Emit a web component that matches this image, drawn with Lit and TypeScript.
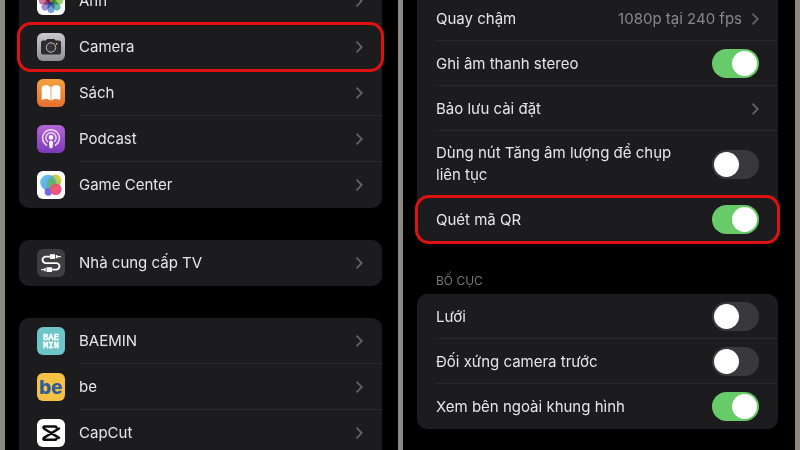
import { LitElement, html, svg, css, nothing, type TemplateResult } from "lit";
import { customElement, property } from "lit/decorators.js";
import { classMap } from "lit/directives/class-map.js";

const petals = [
  ["#f39a2e", 0], ["#e9d23b", 45], ["#8fc650", 90], ["#4fae9a", 135],
  ["#5a8fd6", 180], ["#8f78c8", 225], ["#c8608f", 270], ["#e2564a", 315],
] as const;

const icons: Record<string, TemplateResult> = {
  photos: svg`
    <rect width="28" height="28" rx="6" fill="#fff"/>
    ${petals.map(([c, a]) => svg`<rect class="petal" x="10.500" y="2" width="7" height="11.500" rx="3.500" fill=${c} fill-opacity="0.85" transform=${`rotate(${a} 14 14)`}/>`)}`,
  camera: svg`
    <defs><linearGradient id="cam" x1="0" y1="0" x2="0" y2="1"><stop offset="0" stop-color="#c9c9cd"/><stop offset="1" stop-color="#8f8f95"/></linearGradient></defs>
    <rect width="28" height="28" rx="6" fill="url(#cam)"/>
    <path d="M6 7.6h3l1.2-1.5h7.3l1.3 1.5H22a2 2 0 0 1 2 2v10a2 2 0 0 1-2 2H6a2 2 0 0 1-2-2v-10a2 2 0 0 1 2-2z" fill="#2c2c2e"/>
    <circle cx="14" cy="14.5" r="4.7" fill="#343436" stroke="#bcbcc0" stroke-width="1"/>
    <circle cx="19.6" cy="10.8" r="0.9" fill="#e0bd55"/>`,
  books: svg`
    <defs><linearGradient id="book" x1="0" y1="0" x2="0" y2="1"><stop offset="0" stop-color="#f3a13f"/><stop offset="1" stop-color="#e8702e"/></linearGradient></defs>
    <rect width="28" height="28" rx="6" fill="url(#book)"/>
    <path d="M13.6 8.4C12.6 6.7 11 6.2 9 6.2 7.1 6.2 4.7 6.9 4.7 8.2V21c1.4-.8 2.8-1.1 4.3-1.1 1.9 0 3.5.5 4.6 1.8zM14.4 8.4c1-1.7 2.600-2.200 4.600-2.200 1.900 0 4.300.7 4.300 2V21c-1.400-.8-2.800-1.100-4.300-1.100-1.900 0-3.500.5-4.600 1.800z" fill="#fff"/>`,
  podcast: svg`
    <defs><linearGradient id="pod" x1="0" y1="0" x2="0" y2="1"><stop offset="0" stop-color="#b565d6"/><stop offset="1" stop-color="#7d3bb8"/></linearGradient></defs>
    <rect width="28" height="28" rx="6" fill="url(#pod)"/>
    <g fill="none" stroke="#ecdcf5" stroke-width="1.4" stroke-linecap="round">
      <path d="M9.7 20.3A8.4 8.4 0 1 1 18.3 20.3"/>
      <path d="M10.5 16.600A5.100 5.100 0 1 1 17.500 16.600"/>
    </g>
    <circle cx="14" cy="12.4" r="2.3" fill="#fff"/>
    <path d="M12 17.600c0-1.200.8-1.800 2-1.800s2 .6 2 1.800l-.5 4.400c-.2 1-.7 1.400-1.500 1.400s-1.300-.4-1.500-1.400z" fill="#fff"/>`,
  games: svg`
    <defs>
      <linearGradient id="g1" x1="0" y1="0" x2="1" y2="1"><stop offset="0" stop-color="#58c2e8"/><stop offset="1" stop-color="#4a90e8"/></linearGradient>
      <linearGradient id="g2" x1="1" y1="0" x2="0" y2="1"><stop offset="0" stop-color="#f9d43c"/><stop offset="1" stop-color="#62bf56"/></linearGradient>
      <linearGradient id="g3" x1="0" y1="0" x2="1" y2="1"><stop offset="0" stop-color="#f0566a"/><stop offset="1" stop-color="#ee3f78"/></linearGradient>
    </defs>
    <rect width="28" height="28" rx="6" fill="#fff"/>
    <circle cx="18.3" cy="9.6" r="6.2" fill="url(#g2)"/>
    <circle cx="11" cy="11.5" r="7.8" fill="url(#g1)" fill-opacity="0.9"/>
    <path d="M12.6 7.4a6.2 6.2 0 0 1 6.2 4.3 7.8 7.8 0 0 1-5 7.2 7 7 0 0 1-1.200-11.500z" fill="#62b560" fill-opacity="0.85"/>
    <circle cx="11.3" cy="21" r="3.7" fill="#6a5ae0" fill-opacity="0.92"/>
    <circle cx="18.8" cy="18.3" r="5.8" fill="url(#g3)" fill-opacity="0.92"/>`,
  tv: svg`
    <rect width="28" height="28" rx="6" fill="#3f3f41"/>
    <path d="M13 7.6H8.8a3.25 3.25 0 0 0 0 6.5h10.400a3.250 3.250 0 0 1 0 6.500H15" fill="none" stroke="#fff" stroke-width="1.9"/>
    <path d="M13 5.3h5v4.6h-5zM18.8 6h1.6v3.2h-1.6zM20.4 7h3.4v1.2h-3.4zM9.5 18.2h5.5v4.8H9.5zM7.2 19h1.6v3.2H7.2zM4.2 20h3v1.2h-3z" fill="#fff"/>`,
  baemin: svg`
    <rect width="28" height="28" rx="6" fill="#6bc5c9"/>
    <text class="baemin" text-anchor="middle"><tspan x="14" y="13">BAE</tspan><tspan x="14" y="21">MIN</tspan></text>`,
  be: svg`
    <rect width="28" height="28" rx="6" fill="#f7c244"/>
    <text class="be" x="14" y="21" text-anchor="middle">be</text>`,
  capcut: svg`
    <rect width="28" height="28" rx="6" fill="#fff"/>
    <path d="M22.8 9 7.600 18.400c-1.300.8-1.900 2.400.2 2.400h10.400c1.100 0 1.300-.5 1.300-1.800M22.800 19.400 7.600 10c-1.300-.8-1.900-2.400.2-2.400h10.400c1.100 0 1.300.5 1.300 1.800" fill="none" stroke="#0b0b0c" stroke-width="2.5"/>`,
};

const chevron = html`<svg class="chevron" width="8" height="14" viewBox="0 0 8 14" aria-hidden="true">
  <path d="M1.5 1.7 6.7 7l-5.2 5.3" fill="none" stroke="#626265" stroke-width="1.8"/></svg>`;

const rowStyles = css`
  :host { display: block; }
  .row {
    position: relative;
    display: flex;
    align-items: center;
    box-sizing: border-box;
    padding: 0 19px;
    color: #e6e6e8;
    font-size: 15px;
    line-height: 22px;
    text-decoration: none;
  }
  .label { flex: 1; min-width: 0; }
  .chevron { flex: none; }
  .row::before {
    content: "";
    position: absolute;
    left: var(--line-start);
    right: 0;
    bottom: 0;
    height: 1px;
    background: #29292b;
  }
  .last::before { display: none; }
  .marked::after {
    content: "";
    position: absolute;
    inset: -2px;
    border: 3px solid #df1212;
    border-radius: 14px;
    pointer-events: none;
  }
`;

@customElement("link-row")
class LinkRow extends LitElement {
  @property() label = "";
  @property() value = "";
  @property() icon = "";
  @property({ type: Boolean }) marked = false;
  @property({ type: Boolean }) last = false;

  static styles = [rowStyles, css`
    :host { --line-start: 60px; }
    :host([value]), :host([plain]) { --line-start: 19px; }
    .row { min-height: var(--row-height); }
    .icon { flex: none; margin: 0 14px 0 -1px; }
    .value { color: #88888b; margin-right: 9px; }
    .petal { mix-blend-mode: multiply; }
    .baemin { font: 700 9px/1 "Liberation Mono", monospace; fill: #fff; stroke: #fff; stroke-width: 0.3; }
    .be { font: 800 19px/1 Inter, sans-serif; fill: #2f5c9a; }
  `];

  render() {
    return html`<a href="#" class="row ${classMap({ marked: this.marked, last: this.last })}">
      ${this.icon ? html`<svg class="icon" width="28" height="28" viewBox="0 0 28 28" aria-hidden="true">${icons[this.icon]}</svg>` : nothing}
      <span class="label">${this.label}</span>
      ${this.value ? html`<span class="value">${this.value}</span>` : nothing}
      ${chevron}
    </a>`;
  }
}

@customElement("switch-row")
class SwitchRow extends LitElement {
  @property() label = "";
  @property({ type: Boolean }) on = false;
  @property({ type: Boolean }) marked = false;
  @property({ type: Boolean }) last = false;

  static styles = [rowStyles, css`
    :host { --line-start: 19px; }
    .row { min-height: var(--row-height); padding-top: 11px; padding-bottom: 11px; }
    .label { padding-right: 32px; }
    .switch {
      appearance: none;
      flex: none;
      display: flex;
      box-sizing: border-box;
      width: 47px;
      height: 29px;
      margin: -4px 0;
      padding: 2px;
      border-radius: 15px;
      background: #39393c;
    }
    .switch::before {
      content: "";
      width: 25px;
      height: 25px;
      border-radius: 50%;
      background: #fff;
    }
    .switch:checked { background: #68cb69; justify-content: flex-end; }
  `];

  render() {
    return html`<label class="row ${classMap({ marked: this.marked, last: this.last })}">
      <span class="label">${this.label}</span>
      <input class="switch" type="checkbox" role="switch" .checked=${this.on}>
    </label>`;
  }
}

@customElement("app-root")
class AppRoot extends LitElement {
  static styles = css`
    :host {
      display: grid;
      grid-template-columns: 393fr 392fr;
      gap: 5px;
      padding: 0 5px;
      box-sizing: border-box;
      height: 100vh;
      overflow: hidden;
      background: #8d8882;
      font-family: Inter, "Noto Sans", sans-serif;
    }
    .phone {
      display: flex;
      flex-direction: column;
      min-width: 0;
      min-height: 0;
      background: #000;
      overflow: hidden;
    }
    .apps { --row-height: 46px; gap: 32px; padding: 0 16px 0 14px; }
    .camera { --row-height: 45px; padding: 0 17px 0 14px; }
    .card { flex: none; border-radius: 10px; background: #1c1c1e; }
    .scrolled { margin-top: -22px; }
    .camera .scrolled { margin-top: -4px; }
    .from-above { border-top-left-radius: 0; border-top-right-radius: 0; }
    .runs-on { border-bottom-left-radius: 0; border-bottom-right-radius: 0; }
    .heading {
      flex: none;
      margin: 31px 19px 5px;
      color: #77777a;
      font-size: 12px;
      line-height: 16px;
      font-weight: 400;
    }
  `;

  render() {
    return html`
      <section class="phone apps">
        <div class="card scrolled">
          <link-row icon="photos" label="Ảnh"></link-row>
          <link-row icon="camera" label="Camera" marked></link-row>
          <link-row icon="books" label="Sách"></link-row>
          <link-row icon="podcast" label="Podcast"></link-row>
          <link-row icon="games" label="Game Center" last></link-row>
        </div>
        <div class="card">
          <link-row icon="tv" label="Nhà cung cấp TV" last></link-row>
        </div>
        <div class="card runs-on">
          <link-row icon="baemin" label="BAEMIN"></link-row>
          <link-row icon="be" label="be"></link-row>
          <link-row icon="capcut" label="CapCut"></link-row>
        </div>
      </section>
      <section class="phone camera">
        <div class="card scrolled from-above">
          <link-row label="Quay chậm" value="1080p tại 240 fps"></link-row>
          <switch-row label="Ghi âm thanh stereo" on></switch-row>
          <link-row label="Bảo lưu cài đặt" plain></link-row>
          <switch-row label="Dùng nút Tăng âm lượng để chụp liên tục"></switch-row>
          <switch-row label="Quét mã QR" on marked last></switch-row>
        </div>
        <h2 class="heading">BỐ CỤC</h2>
        <div class="card">
          <switch-row label="Lưới"></switch-row>
          <switch-row label="Đối xứng camera trước"></switch-row>
          <switch-row label="Xem bên ngoài khung hình" on last></switch-row>
        </div>
      </section>`;
  }
}
